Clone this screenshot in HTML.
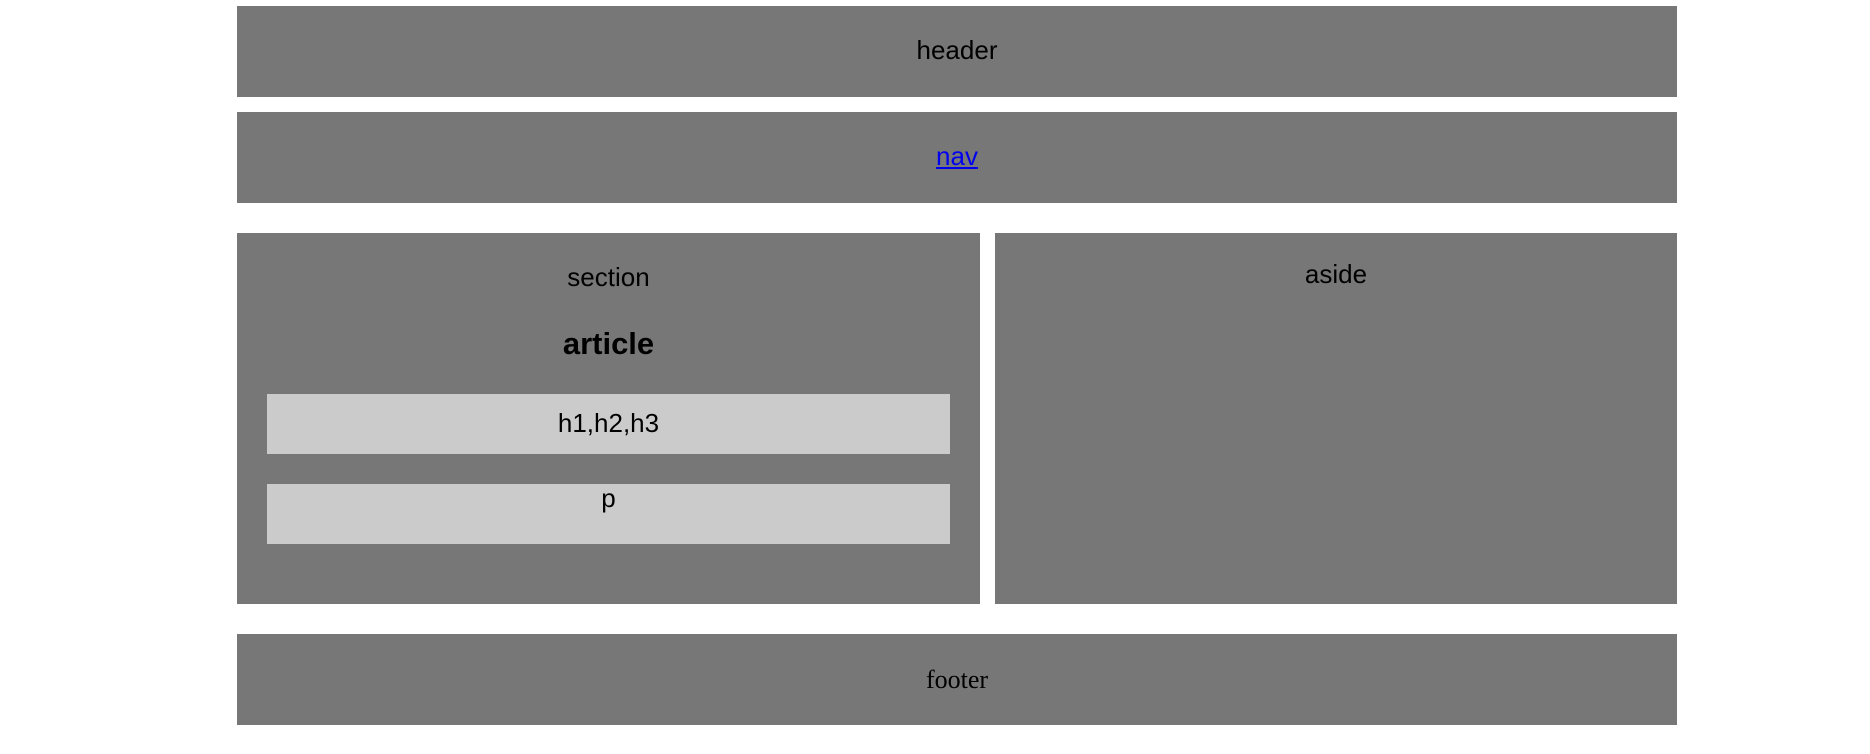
<!DOCTYPE html>
<html><head><meta charset="utf-8"><style>
body{margin:0;width:1870px;height:754px;background:#fff;position:relative;overflow:hidden;font-family:"Liberation Sans",sans-serif;}
.b{position:absolute;background:#777;}
.l{position:absolute;background:#cbcbcb;}
.t{position:absolute;left:0;right:0;text-align:center;font-size:26px;line-height:30px;color:#000;}
</style></head><body>
<div class="b" style="left:237px;top:6px;width:1440px;height:91px"><div class="t" style="top:29px">header</div></div>
<div class="b" style="left:237px;top:112px;width:1440px;height:91px"><div class="t" style="top:29px"><a href="#nav" style="color:#00e">nav</a></div></div>
<div class="b" style="left:237px;top:233px;width:743px;height:371px">
<div class="t" style="top:29px">section</div>
<div class="t" style="top:93px;font-size:31px;font-weight:bold;line-height:36px">article</div>
</div>
<div class="l" style="left:267px;top:394px;width:683px;height:60px"><div class="t" style="top:14px">h1,h2,h3</div></div>
<div class="l" style="left:267px;top:484px;width:683px;height:60px"><div class="t" style="top:-1px">p</div></div>
<div class="b" style="left:995px;top:233px;width:682px;height:371px"><div class="t" style="top:26px">aside</div></div>
<div class="b" style="left:237px;top:634px;width:1440px;height:91px"><div class="t" style="top:31px;font-family:'Liberation Serif',serif">footer</div></div>
</body></html>
